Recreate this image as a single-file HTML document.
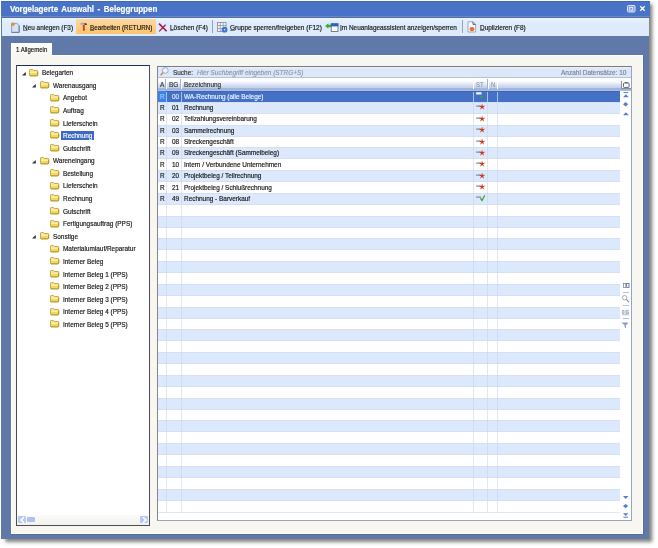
<!DOCTYPE html>
<html><head><meta charset="utf-8"><title>Vorgelagerte Auswahl - Beleggruppen</title>
<style>
html,body{margin:0;padding:0;background:#fff;}
body{width:658px;height:548px;position:relative;overflow:hidden;font-family:"Liberation Sans",sans-serif;}
.abs{position:absolute;}
.t{-webkit-text-stroke:0.18px currentColor;position:absolute;white-space:nowrap;line-height:12px;height:12px;transform-origin:0 50%;display:block;}
u{text-decoration:underline;text-decoration-color:rgba(30,30,30,.5);text-underline-offset:0px;text-decoration-thickness:0.8px;}
svg{position:absolute;overflow:visible;}
</style></head><body><div id="w" style="position:absolute;left:0;top:0;width:658px;height:548px;will-change:transform;">

<div class="abs" style="left:1.3px;top:1.4px;width:648.2px;height:538px;background:#6079a8;box-shadow:3.5px 3px 3.5px rgba(60,60,50,.64);"></div>
<div class="abs" style="left:1.3px;top:1.4px;width:648.6px;height:15.3px;background:#4873c6;border-top:0.8px solid #4267b6;border-bottom:0.8px solid #6389d4;box-sizing:border-box;"></div>
<div class="abs" style="left:1.3px;top:16.7px;width:648.6px;height:1px;background:#596e9c;"></div>
<span class="t " style="left:10px;top:3.00px;color:#fff;font-size:8.3px;transform:scaleX(0.96);font-weight:bold;word-spacing:1.35px;-webkit-text-stroke:0.15px #fff;">Vorgelagerte Auswahl - Beleggruppen</span>
<svg style="left:627px;top:5px" width="9" height="8" viewBox="0 0 9 8"><rect x="0.5" y="0.5" width="7.5" height="6.5" rx="1" fill="#7e9bd8" stroke="#dfe8f8" stroke-width="1"/><rect x="2.6" y="2.4" width="3.2" height="2.8" fill="none" stroke="#e8eefa" stroke-width="0.9"/></svg>
<svg style="left:640px;top:6px" width="5" height="5" viewBox="0 0 5 5"><path d="M0.3 0.3L4.7 4.7M4.7 0.3L0.3 4.7" stroke="#fff" stroke-width="1.3" fill="none"/></svg>
<div class="abs" style="left:1.5px;top:17.7px;width:647.8px;height:18.2px;background:linear-gradient(#ebf4ff 0%,#ddebfd 30%,#ddebfd 100%);"></div>
<div class="abs" style="left:75.8px;top:19.2px;width:79.8px;height:15px;background:linear-gradient(#fdd8a2,#fbc46c);"></div>
<span class="t " style="left:22.6px;top:22.20px;color:#141414;font-size:7.4px;transform:scaleX(0.87);"><u>N</u>eu anlegen (F3)</span>
<span class="t " style="left:90px;top:22.20px;color:#141414;font-size:7.4px;transform:scaleX(0.847);"><u>B</u>earbeiten (RETURN)</span>
<span class="t " style="left:170px;top:22.20px;color:#141414;font-size:7.4px;transform:scaleX(0.87);"><u>L</u>öschen (F4)</span>
<span class="t " style="left:229.7px;top:22.20px;color:#141414;font-size:7.4px;transform:scaleX(0.88);"><u>G</u>ruppe sperren/freigeben (F12)</span>
<span class="t " style="left:340px;top:22.20px;color:#141414;font-size:7.4px;transform:scaleX(0.87);"><u>I</u>m Neuanlageassistent anzeigen/sperren</span>
<span class="t " style="left:479.7px;top:22.20px;color:#141414;font-size:7.4px;transform:scaleX(0.87);"><u>D</u>uplizieren (F8)</span>
<div class="abs" style="left:212px;top:19.5px;width:0.9px;height:13.5px;background:#98a2b8;"></div>
<div class="abs" style="left:462px;top:19.5px;width:0.9px;height:13.5px;background:#98a2b8;"></div>
<svg style="left:11px;top:22px" width="9" height="12" viewBox="0 0 9 12"><path d="M0.6 1.4H5.8L8.2 3.6V10.4H0.6Z" fill="#d6e1f6" stroke="#8495b6" stroke-width="0.9"/><path d="M0.6 10.4H8.2V3.6" fill="none" stroke="#66789c" stroke-width="0.9"/><circle cx="1.9" cy="2.2" r="1.7" fill="#ee8a28"/></svg>
<svg style="left:79.5px;top:21.9px" width="8" height="9" viewBox="0 0 8 9"><path d="M0.4 1.2Q2.5 0.2 4.5 0.9L6.6 1.6V2.9L4.5 2.7H0.6Z" fill="#b7a3a3"/><path d="M4.6 1L6.7 1.7V3L4.6 2.8Z" fill="#2c2222"/><path d="M2.7 2.9H4.9L4.7 8.2Q3.8 8.8 3 8.2Z" fill="#d44a2a"/><path d="M3 7.4H4.7L4.6 8.3Q3.8 8.8 3.1 8.3Z" fill="#8a1c10"/></svg>
<svg style="left:158px;top:23px" width="9" height="9" viewBox="0 0 9 9"><path d="M1 0.6L8.6 8.2" stroke="#a41a3c" stroke-width="1.6" fill="none"/><path d="M7.6 1.8L1.2 8.4" stroke="#a41a3c" stroke-width="1.3" fill="none"/></svg>
<svg style="left:217px;top:22px" width="10" height="11" viewBox="0 0 10 11"><rect x="0.5" y="0.5" width="8.5" height="9" fill="#f4f6fb" stroke="#8b8698" stroke-width="0.8"/><path d="M0.5 3.5H9M0.5 6.5H9M3.3 0.5V9.5M6.2 0.5V9.5" stroke="#8b8698" stroke-width="0.7"/><circle cx="7.6" cy="7.7" r="2.9" fill="#3b78d2"/><circle cx="7.6" cy="7.7" r="0.8" fill="#cfe4ff"/></svg>
<svg style="left:325px;top:23px" width="14" height="9" viewBox="0 0 14 9"><path d="M0.1 3L3.4 0.2V1.7H6.5V4.3H3.4V5.8Z" fill="#36b326"/><rect x="6.2" y="0.8" width="6.8" height="7.6" fill="#fbfcff" stroke="#5a6070" stroke-width="0.8"/><rect x="5.9" y="0.4" width="7.4" height="3" fill="#2c62c2"/></svg>
<svg style="left:467px;top:20.5px" width="10" height="12" viewBox="0 0 10 12"><path d="M1 0.8H6L8.6 3.4V11H1Z" fill="#f7f8fc" stroke="#8c98b4" stroke-width="0.8"/><path d="M6 0.8V3.4H8.6" fill="none" stroke="#4a5060" stroke-width="0.9"/><ellipse cx="5" cy="8.1" rx="2.5" ry="2.2" fill="#ee6a2e"/></svg>
<div class="abs" style="left:11px;top:43px;width:41px;height:13px;background:linear-gradient(#fefefd,#f8f7f3);"></div>
<div class="abs" style="left:11px;top:55px;width:632px;height:478.5px;background:#f7f6f1;box-shadow:0.6px 0.6px 0 0.2px #536c9e;"></div>
<div class="abs" style="left:11px;top:532.6px;width:632px;height:0.9px;background:#fff;"></div>
<div class="abs" style="left:642.1px;top:55px;width:0.9px;height:478.5px;background:#fff;"></div>
<div class="abs" style="left:11px;top:43px;width:1.2px;height:490.5px;background:#fff;"></div>
<div class="abs" style="left:52px;top:55px;width:591px;height:1px;background:#fff;"></div>
<span class="t " style="left:16.4px;top:43.50px;color:#141414;font-size:7.4px;transform:scaleX(0.82);">1 Allgemein</span>
<div class="abs" style="left:16px;top:65.2px;width:133.6px;height:460.4px;background:#fff;border:0.9px solid #4c4c54;border-top:1.5px solid #1f2d5c;box-sizing:border-box;"></div>
<div class="abs" style="left:17px;top:515.3px;width:131.5px;height:9.3px;background:linear-gradient(#fbfbf9,#f2f1ec);"></div>
<div class="abs" style="left:18px;top:516.2px;width:8px;height:7.2px;background:#b7c9f3;border-radius:1px;"></div>
<svg style="left:19.6px;top:516.9px" width="5" height="6" viewBox="0 0 5 6"><path d="M4 0.3L1 3L4 5.7" stroke="#fff" stroke-width="1.5" fill="none"/></svg>
<div class="abs" style="left:27.1px;top:517.1px;width:8.4px;height:5.2px;background:#afc2ef;border-radius:1px;"></div>
<div class="abs" style="left:139.6px;top:516.2px;width:8.2px;height:7.2px;background:#b7c9f3;border-radius:1px;"></div>
<svg style="left:141.6px;top:516.9px" width="5" height="6" viewBox="0 0 5 6"><path d="M1 0.3L4 3L1 5.7" stroke="#fff" stroke-width="1.5" fill="none"/></svg>
<svg style="left:22.2px;top:71.70px" width="3.8" height="3.4" viewBox="0 0 3.8 3.4"><path d="M3.8 0V3.4H0Z" fill="#2e2e2e"/></svg>
<svg style="left:29.00px;top:68.50px" width="9.2" height="7.3" viewBox="0 0 9 7.6" preserveAspectRatio="none"><path d="M0.5 1.3Q0.5 0.5 1.3 0.5H3.3L4.2 1.5H7.7Q8.5 1.5 8.5 2.3V6.3Q8.5 7.1 7.7 7.1H1.3Q0.5 7.1 0.5 6.3Z" fill="#f7e596" stroke="#b99a30" stroke-width="0.85"/><path d="M0.9 3H8.1V6.2Q8.1 6.7 7.6 6.7H1.4Q0.9 6.7 0.9 6.2Z" fill="#f4d958"/><path d="M1.2 3.6H7.8" stroke="#fcf1ad" stroke-width="1"/><path d="M0.6 6.6Q0.8 7.1 1.4 7.1H7.6Q8.5 7.1 8.5 6.2V3" fill="none" stroke="#a88c26" stroke-width="0.85"/></svg>
<span class="t " style="left:42.2px;top:67.20px;color:#141414;font-size:7.4px;transform:scaleX(0.87);">Belegarten</span>
<svg style="left:32.4px;top:84.29px" width="3.8" height="3.4" viewBox="0 0 3.8 3.4"><path d="M3.8 0V3.4H0Z" fill="#2e2e2e"/></svg>
<svg style="left:40.00px;top:81.09px" width="9.2" height="7.3" viewBox="0 0 9 7.6" preserveAspectRatio="none"><path d="M0.5 1.3Q0.5 0.5 1.3 0.5H3.3L4.2 1.5H7.7Q8.5 1.5 8.5 2.3V6.3Q8.5 7.1 7.7 7.1H1.3Q0.5 7.1 0.5 6.3Z" fill="#f7e596" stroke="#b99a30" stroke-width="0.85"/><path d="M0.9 3H8.1V6.2Q8.1 6.7 7.6 6.7H1.4Q0.9 6.7 0.9 6.2Z" fill="#f4d958"/><path d="M1.2 3.6H7.8" stroke="#fcf1ad" stroke-width="1"/><path d="M0.6 6.6Q0.8 7.1 1.4 7.1H7.6Q8.5 7.1 8.5 6.2V3" fill="none" stroke="#a88c26" stroke-width="0.85"/></svg>
<span class="t " style="left:52.9px;top:79.79px;color:#141414;font-size:7.4px;transform:scaleX(0.87);">Warenausgang</span>
<svg style="left:50.20px;top:93.67px" width="9.2" height="7.3" viewBox="0 0 9 7.6" preserveAspectRatio="none"><path d="M0.5 1.3Q0.5 0.5 1.3 0.5H3.3L4.2 1.5H7.7Q8.5 1.5 8.5 2.3V6.3Q8.5 7.1 7.7 7.1H1.3Q0.5 7.1 0.5 6.3Z" fill="#f7e596" stroke="#b99a30" stroke-width="0.85"/><path d="M0.9 3H8.1V6.2Q8.1 6.7 7.6 6.7H1.4Q0.9 6.7 0.9 6.2Z" fill="#f4d958"/><path d="M1.2 3.6H7.8" stroke="#fcf1ad" stroke-width="1"/><path d="M0.6 6.6Q0.8 7.1 1.4 7.1H7.6Q8.5 7.1 8.5 6.2V3" fill="none" stroke="#a88c26" stroke-width="0.85"/></svg>
<span class="t " style="left:62.8px;top:92.37px;color:#141414;font-size:7.4px;transform:scaleX(0.87);">Angebot</span>
<svg style="left:50.20px;top:106.25px" width="9.2" height="7.3" viewBox="0 0 9 7.6" preserveAspectRatio="none"><path d="M0.5 1.3Q0.5 0.5 1.3 0.5H3.3L4.2 1.5H7.7Q8.5 1.5 8.5 2.3V6.3Q8.5 7.1 7.7 7.1H1.3Q0.5 7.1 0.5 6.3Z" fill="#f7e596" stroke="#b99a30" stroke-width="0.85"/><path d="M0.9 3H8.1V6.2Q8.1 6.7 7.6 6.7H1.4Q0.9 6.7 0.9 6.2Z" fill="#f4d958"/><path d="M1.2 3.6H7.8" stroke="#fcf1ad" stroke-width="1"/><path d="M0.6 6.6Q0.8 7.1 1.4 7.1H7.6Q8.5 7.1 8.5 6.2V3" fill="none" stroke="#a88c26" stroke-width="0.85"/></svg>
<span class="t " style="left:62.8px;top:104.95px;color:#141414;font-size:7.4px;transform:scaleX(0.87);">Auftrag</span>
<svg style="left:50.20px;top:118.84px" width="9.2" height="7.3" viewBox="0 0 9 7.6" preserveAspectRatio="none"><path d="M0.5 1.3Q0.5 0.5 1.3 0.5H3.3L4.2 1.5H7.7Q8.5 1.5 8.5 2.3V6.3Q8.5 7.1 7.7 7.1H1.3Q0.5 7.1 0.5 6.3Z" fill="#f7e596" stroke="#b99a30" stroke-width="0.85"/><path d="M0.9 3H8.1V6.2Q8.1 6.7 7.6 6.7H1.4Q0.9 6.7 0.9 6.2Z" fill="#f4d958"/><path d="M1.2 3.6H7.8" stroke="#fcf1ad" stroke-width="1"/><path d="M0.6 6.6Q0.8 7.1 1.4 7.1H7.6Q8.5 7.1 8.5 6.2V3" fill="none" stroke="#a88c26" stroke-width="0.85"/></svg>
<span class="t " style="left:62.8px;top:117.54px;color:#141414;font-size:7.4px;transform:scaleX(0.87);">Lieferschein</span>
<svg style="left:50.20px;top:131.43px" width="9.2" height="7.3" viewBox="0 0 9 7.6" preserveAspectRatio="none"><path d="M0.5 1.3Q0.5 0.5 1.3 0.5H3.3L4.2 1.5H7.7Q8.5 1.5 8.5 2.3V6.3Q8.5 7.1 7.7 7.1H1.3Q0.5 7.1 0.5 6.3Z" fill="#f7e596" stroke="#b99a30" stroke-width="0.85"/><path d="M0.9 3H8.1V6.2Q8.1 6.7 7.6 6.7H1.4Q0.9 6.7 0.9 6.2Z" fill="#f4d958"/><path d="M1.2 3.6H7.8" stroke="#fcf1ad" stroke-width="1"/><path d="M0.6 6.6Q0.8 7.1 1.4 7.1H7.6Q8.5 7.1 8.5 6.2V3" fill="none" stroke="#a88c26" stroke-width="0.85"/></svg>
<div class="abs" style="left:61px;top:131.13px;width:32.6px;height:9.2px;background:#3c69c2;"></div>
<span class="t " style="left:62.8px;top:130.13px;color:#fff;font-size:7.4px;transform:scaleX(0.87);">Rechnung</span>
<svg style="left:50.20px;top:144.01px" width="9.2" height="7.3" viewBox="0 0 9 7.6" preserveAspectRatio="none"><path d="M0.5 1.3Q0.5 0.5 1.3 0.5H3.3L4.2 1.5H7.7Q8.5 1.5 8.5 2.3V6.3Q8.5 7.1 7.7 7.1H1.3Q0.5 7.1 0.5 6.3Z" fill="#f7e596" stroke="#b99a30" stroke-width="0.85"/><path d="M0.9 3H8.1V6.2Q8.1 6.7 7.6 6.7H1.4Q0.9 6.7 0.9 6.2Z" fill="#f4d958"/><path d="M1.2 3.6H7.8" stroke="#fcf1ad" stroke-width="1"/><path d="M0.6 6.6Q0.8 7.1 1.4 7.1H7.6Q8.5 7.1 8.5 6.2V3" fill="none" stroke="#a88c26" stroke-width="0.85"/></svg>
<span class="t " style="left:62.8px;top:142.71px;color:#141414;font-size:7.4px;transform:scaleX(0.87);">Gutschrift</span>
<svg style="left:32.4px;top:159.80px" width="3.8" height="3.4" viewBox="0 0 3.8 3.4"><path d="M3.8 0V3.4H0Z" fill="#2e2e2e"/></svg>
<svg style="left:40.00px;top:156.59px" width="9.2" height="7.3" viewBox="0 0 9 7.6" preserveAspectRatio="none"><path d="M0.5 1.3Q0.5 0.5 1.3 0.5H3.3L4.2 1.5H7.7Q8.5 1.5 8.5 2.3V6.3Q8.5 7.1 7.7 7.1H1.3Q0.5 7.1 0.5 6.3Z" fill="#f7e596" stroke="#b99a30" stroke-width="0.85"/><path d="M0.9 3H8.1V6.2Q8.1 6.7 7.6 6.7H1.4Q0.9 6.7 0.9 6.2Z" fill="#f4d958"/><path d="M1.2 3.6H7.8" stroke="#fcf1ad" stroke-width="1"/><path d="M0.6 6.6Q0.8 7.1 1.4 7.1H7.6Q8.5 7.1 8.5 6.2V3" fill="none" stroke="#a88c26" stroke-width="0.85"/></svg>
<span class="t " style="left:52.9px;top:155.30px;color:#141414;font-size:7.4px;transform:scaleX(0.87);">Wareneingang</span>
<svg style="left:50.20px;top:169.18px" width="9.2" height="7.3" viewBox="0 0 9 7.6" preserveAspectRatio="none"><path d="M0.5 1.3Q0.5 0.5 1.3 0.5H3.3L4.2 1.5H7.7Q8.5 1.5 8.5 2.3V6.3Q8.5 7.1 7.7 7.1H1.3Q0.5 7.1 0.5 6.3Z" fill="#f7e596" stroke="#b99a30" stroke-width="0.85"/><path d="M0.9 3H8.1V6.2Q8.1 6.7 7.6 6.7H1.4Q0.9 6.7 0.9 6.2Z" fill="#f4d958"/><path d="M1.2 3.6H7.8" stroke="#fcf1ad" stroke-width="1"/><path d="M0.6 6.6Q0.8 7.1 1.4 7.1H7.6Q8.5 7.1 8.5 6.2V3" fill="none" stroke="#a88c26" stroke-width="0.85"/></svg>
<span class="t " style="left:62.8px;top:167.88px;color:#141414;font-size:7.4px;transform:scaleX(0.87);">Bestellung</span>
<svg style="left:50.20px;top:181.77px" width="9.2" height="7.3" viewBox="0 0 9 7.6" preserveAspectRatio="none"><path d="M0.5 1.3Q0.5 0.5 1.3 0.5H3.3L4.2 1.5H7.7Q8.5 1.5 8.5 2.3V6.3Q8.5 7.1 7.7 7.1H1.3Q0.5 7.1 0.5 6.3Z" fill="#f7e596" stroke="#b99a30" stroke-width="0.85"/><path d="M0.9 3H8.1V6.2Q8.1 6.7 7.6 6.7H1.4Q0.9 6.7 0.9 6.2Z" fill="#f4d958"/><path d="M1.2 3.6H7.8" stroke="#fcf1ad" stroke-width="1"/><path d="M0.6 6.6Q0.8 7.1 1.4 7.1H7.6Q8.5 7.1 8.5 6.2V3" fill="none" stroke="#a88c26" stroke-width="0.85"/></svg>
<span class="t " style="left:62.8px;top:180.47px;color:#141414;font-size:7.4px;transform:scaleX(0.87);">Lieferschein</span>
<svg style="left:50.20px;top:194.35px" width="9.2" height="7.3" viewBox="0 0 9 7.6" preserveAspectRatio="none"><path d="M0.5 1.3Q0.5 0.5 1.3 0.5H3.3L4.2 1.5H7.7Q8.5 1.5 8.5 2.3V6.3Q8.5 7.1 7.7 7.1H1.3Q0.5 7.1 0.5 6.3Z" fill="#f7e596" stroke="#b99a30" stroke-width="0.85"/><path d="M0.9 3H8.1V6.2Q8.1 6.7 7.6 6.7H1.4Q0.9 6.7 0.9 6.2Z" fill="#f4d958"/><path d="M1.2 3.6H7.8" stroke="#fcf1ad" stroke-width="1"/><path d="M0.6 6.6Q0.8 7.1 1.4 7.1H7.6Q8.5 7.1 8.5 6.2V3" fill="none" stroke="#a88c26" stroke-width="0.85"/></svg>
<span class="t " style="left:62.8px;top:193.05px;color:#141414;font-size:7.4px;transform:scaleX(0.87);">Rechnung</span>
<svg style="left:50.20px;top:206.94px" width="9.2" height="7.3" viewBox="0 0 9 7.6" preserveAspectRatio="none"><path d="M0.5 1.3Q0.5 0.5 1.3 0.5H3.3L4.2 1.5H7.7Q8.5 1.5 8.5 2.3V6.3Q8.5 7.1 7.7 7.1H1.3Q0.5 7.1 0.5 6.3Z" fill="#f7e596" stroke="#b99a30" stroke-width="0.85"/><path d="M0.9 3H8.1V6.2Q8.1 6.7 7.6 6.7H1.4Q0.9 6.7 0.9 6.2Z" fill="#f4d958"/><path d="M1.2 3.6H7.8" stroke="#fcf1ad" stroke-width="1"/><path d="M0.6 6.6Q0.8 7.1 1.4 7.1H7.6Q8.5 7.1 8.5 6.2V3" fill="none" stroke="#a88c26" stroke-width="0.85"/></svg>
<span class="t " style="left:62.8px;top:205.64px;color:#141414;font-size:7.4px;transform:scaleX(0.87);">Gutschrift</span>
<svg style="left:50.20px;top:219.52px" width="9.2" height="7.3" viewBox="0 0 9 7.6" preserveAspectRatio="none"><path d="M0.5 1.3Q0.5 0.5 1.3 0.5H3.3L4.2 1.5H7.7Q8.5 1.5 8.5 2.3V6.3Q8.5 7.1 7.7 7.1H1.3Q0.5 7.1 0.5 6.3Z" fill="#f7e596" stroke="#b99a30" stroke-width="0.85"/><path d="M0.9 3H8.1V6.2Q8.1 6.7 7.6 6.7H1.4Q0.9 6.7 0.9 6.2Z" fill="#f4d958"/><path d="M1.2 3.6H7.8" stroke="#fcf1ad" stroke-width="1"/><path d="M0.6 6.6Q0.8 7.1 1.4 7.1H7.6Q8.5 7.1 8.5 6.2V3" fill="none" stroke="#a88c26" stroke-width="0.85"/></svg>
<span class="t " style="left:62.8px;top:218.22px;color:#141414;font-size:7.4px;transform:scaleX(0.87);">Fertigungsauftrag (PPS)</span>
<svg style="left:32.4px;top:235.31px" width="3.8" height="3.4" viewBox="0 0 3.8 3.4"><path d="M3.8 0V3.4H0Z" fill="#2e2e2e"/></svg>
<svg style="left:40.00px;top:232.11px" width="9.2" height="7.3" viewBox="0 0 9 7.6" preserveAspectRatio="none"><path d="M0.5 1.3Q0.5 0.5 1.3 0.5H3.3L4.2 1.5H7.7Q8.5 1.5 8.5 2.3V6.3Q8.5 7.1 7.7 7.1H1.3Q0.5 7.1 0.5 6.3Z" fill="#f7e596" stroke="#b99a30" stroke-width="0.85"/><path d="M0.9 3H8.1V6.2Q8.1 6.7 7.6 6.7H1.4Q0.9 6.7 0.9 6.2Z" fill="#f4d958"/><path d="M1.2 3.6H7.8" stroke="#fcf1ad" stroke-width="1"/><path d="M0.6 6.6Q0.8 7.1 1.4 7.1H7.6Q8.5 7.1 8.5 6.2V3" fill="none" stroke="#a88c26" stroke-width="0.85"/></svg>
<span class="t " style="left:52.9px;top:230.81px;color:#141414;font-size:7.4px;transform:scaleX(0.87);">Sonstige</span>
<svg style="left:50.20px;top:244.69px" width="9.2" height="7.3" viewBox="0 0 9 7.6" preserveAspectRatio="none"><path d="M0.5 1.3Q0.5 0.5 1.3 0.5H3.3L4.2 1.5H7.7Q8.5 1.5 8.5 2.3V6.3Q8.5 7.1 7.7 7.1H1.3Q0.5 7.1 0.5 6.3Z" fill="#f7e596" stroke="#b99a30" stroke-width="0.85"/><path d="M0.9 3H8.1V6.2Q8.1 6.7 7.6 6.7H1.4Q0.9 6.7 0.9 6.2Z" fill="#f4d958"/><path d="M1.2 3.6H7.8" stroke="#fcf1ad" stroke-width="1"/><path d="M0.6 6.6Q0.8 7.1 1.4 7.1H7.6Q8.5 7.1 8.5 6.2V3" fill="none" stroke="#a88c26" stroke-width="0.85"/></svg>
<span class="t " style="left:62.8px;top:243.39px;color:#141414;font-size:7.4px;transform:scaleX(0.87);">Materialumlauf/Reparatur</span>
<svg style="left:50.20px;top:257.28px" width="9.2" height="7.3" viewBox="0 0 9 7.6" preserveAspectRatio="none"><path d="M0.5 1.3Q0.5 0.5 1.3 0.5H3.3L4.2 1.5H7.7Q8.5 1.5 8.5 2.3V6.3Q8.5 7.1 7.7 7.1H1.3Q0.5 7.1 0.5 6.3Z" fill="#f7e596" stroke="#b99a30" stroke-width="0.85"/><path d="M0.9 3H8.1V6.2Q8.1 6.7 7.6 6.7H1.4Q0.9 6.7 0.9 6.2Z" fill="#f4d958"/><path d="M1.2 3.6H7.8" stroke="#fcf1ad" stroke-width="1"/><path d="M0.6 6.6Q0.8 7.1 1.4 7.1H7.6Q8.5 7.1 8.5 6.2V3" fill="none" stroke="#a88c26" stroke-width="0.85"/></svg>
<span class="t " style="left:62.8px;top:255.98px;color:#141414;font-size:7.4px;transform:scaleX(0.87);">Interner Beleg</span>
<svg style="left:50.20px;top:269.86px" width="9.2" height="7.3" viewBox="0 0 9 7.6" preserveAspectRatio="none"><path d="M0.5 1.3Q0.5 0.5 1.3 0.5H3.3L4.2 1.5H7.7Q8.5 1.5 8.5 2.3V6.3Q8.5 7.1 7.7 7.1H1.3Q0.5 7.1 0.5 6.3Z" fill="#f7e596" stroke="#b99a30" stroke-width="0.85"/><path d="M0.9 3H8.1V6.2Q8.1 6.7 7.6 6.7H1.4Q0.9 6.7 0.9 6.2Z" fill="#f4d958"/><path d="M1.2 3.6H7.8" stroke="#fcf1ad" stroke-width="1"/><path d="M0.6 6.6Q0.8 7.1 1.4 7.1H7.6Q8.5 7.1 8.5 6.2V3" fill="none" stroke="#a88c26" stroke-width="0.85"/></svg>
<span class="t " style="left:62.8px;top:268.56px;color:#141414;font-size:7.4px;transform:scaleX(0.87);">Interner Beleg 1 (PPS)</span>
<svg style="left:50.20px;top:282.45px" width="9.2" height="7.3" viewBox="0 0 9 7.6" preserveAspectRatio="none"><path d="M0.5 1.3Q0.5 0.5 1.3 0.5H3.3L4.2 1.5H7.7Q8.5 1.5 8.5 2.3V6.3Q8.5 7.1 7.7 7.1H1.3Q0.5 7.1 0.5 6.3Z" fill="#f7e596" stroke="#b99a30" stroke-width="0.85"/><path d="M0.9 3H8.1V6.2Q8.1 6.7 7.6 6.7H1.4Q0.9 6.7 0.9 6.2Z" fill="#f4d958"/><path d="M1.2 3.6H7.8" stroke="#fcf1ad" stroke-width="1"/><path d="M0.6 6.6Q0.8 7.1 1.4 7.1H7.6Q8.5 7.1 8.5 6.2V3" fill="none" stroke="#a88c26" stroke-width="0.85"/></svg>
<span class="t " style="left:62.8px;top:281.15px;color:#141414;font-size:7.4px;transform:scaleX(0.87);">Interner Beleg 2 (PPS)</span>
<svg style="left:50.20px;top:295.03px" width="9.2" height="7.3" viewBox="0 0 9 7.6" preserveAspectRatio="none"><path d="M0.5 1.3Q0.5 0.5 1.3 0.5H3.3L4.2 1.5H7.7Q8.5 1.5 8.5 2.3V6.3Q8.5 7.1 7.7 7.1H1.3Q0.5 7.1 0.5 6.3Z" fill="#f7e596" stroke="#b99a30" stroke-width="0.85"/><path d="M0.9 3H8.1V6.2Q8.1 6.7 7.6 6.7H1.4Q0.9 6.7 0.9 6.2Z" fill="#f4d958"/><path d="M1.2 3.6H7.8" stroke="#fcf1ad" stroke-width="1"/><path d="M0.6 6.6Q0.8 7.1 1.4 7.1H7.6Q8.5 7.1 8.5 6.2V3" fill="none" stroke="#a88c26" stroke-width="0.85"/></svg>
<span class="t " style="left:62.8px;top:293.73px;color:#141414;font-size:7.4px;transform:scaleX(0.87);">Interner Beleg 3 (PPS)</span>
<svg style="left:50.20px;top:307.62px" width="9.2" height="7.3" viewBox="0 0 9 7.6" preserveAspectRatio="none"><path d="M0.5 1.3Q0.5 0.5 1.3 0.5H3.3L4.2 1.5H7.7Q8.5 1.5 8.5 2.3V6.3Q8.5 7.1 7.7 7.1H1.3Q0.5 7.1 0.5 6.3Z" fill="#f7e596" stroke="#b99a30" stroke-width="0.85"/><path d="M0.9 3H8.1V6.2Q8.1 6.7 7.6 6.7H1.4Q0.9 6.7 0.9 6.2Z" fill="#f4d958"/><path d="M1.2 3.6H7.8" stroke="#fcf1ad" stroke-width="1"/><path d="M0.6 6.6Q0.8 7.1 1.4 7.1H7.6Q8.5 7.1 8.5 6.2V3" fill="none" stroke="#a88c26" stroke-width="0.85"/></svg>
<span class="t " style="left:62.8px;top:306.31px;color:#141414;font-size:7.4px;transform:scaleX(0.87);">Interner Beleg 4 (PPS)</span>
<svg style="left:50.20px;top:320.20px" width="9.2" height="7.3" viewBox="0 0 9 7.6" preserveAspectRatio="none"><path d="M0.5 1.3Q0.5 0.5 1.3 0.5H3.3L4.2 1.5H7.7Q8.5 1.5 8.5 2.3V6.3Q8.5 7.1 7.7 7.1H1.3Q0.5 7.1 0.5 6.3Z" fill="#f7e596" stroke="#b99a30" stroke-width="0.85"/><path d="M0.9 3H8.1V6.2Q8.1 6.7 7.6 6.7H1.4Q0.9 6.7 0.9 6.2Z" fill="#f4d958"/><path d="M1.2 3.6H7.8" stroke="#fcf1ad" stroke-width="1"/><path d="M0.6 6.6Q0.8 7.1 1.4 7.1H7.6Q8.5 7.1 8.5 6.2V3" fill="none" stroke="#a88c26" stroke-width="0.85"/></svg>
<span class="t " style="left:62.8px;top:318.90px;color:#141414;font-size:7.4px;transform:scaleX(0.87);">Interner Beleg 5 (PPS)</span>
<div class="abs" style="left:156.5px;top:65.5px;width:475.0px;height:455.5px;background:#fff;border:1px solid #93a5c9;border-top:1.1px solid #777c86;border-left:1.1px solid #85858f;border-bottom:1px solid #a3a3b6;box-sizing:border-box;"></div>
<div class="abs" style="left:157.5px;top:66.5px;width:473.0px;height:11px;background:linear-gradient(#eef3fb 0px,#dbe6f6 2px,#dde8fa 11px);"></div>
<div class="abs" style="left:157.5px;top:77.2px;width:473.0px;height:13.6px;background:linear-gradient(#ffffff 0px,#ffffff 3px,#dde6f6 6.4px,#bccbe8 10.3px,#9aaccc 10.6px,#9aaccc 11.4px,#a9c0ee 11.7px,#a9c0ee 12.8px);border-top:0.8px solid #b5c2d8;box-sizing:border-box;"></div>
<div class="abs" style="left:165.3px;top:79.3px;width:0.8px;height:9.6px;background:#a6b2cc;"></div>
<div class="abs" style="left:166.1px;top:79.3px;width:0.9px;height:9.6px;background:#fbfdff;"></div>
<div class="abs" style="left:180.1px;top:79.3px;width:0.8px;height:9.6px;background:#a6b2cc;"></div>
<div class="abs" style="left:180.9px;top:79.3px;width:0.9px;height:9.6px;background:#fbfdff;"></div>
<div class="abs" style="left:472.5px;top:79.3px;width:0.8px;height:9.6px;background:#a6b2cc;"></div>
<div class="abs" style="left:473.3px;top:79.3px;width:0.9px;height:9.6px;background:#fbfdff;"></div>
<div class="abs" style="left:486.7px;top:79.3px;width:0.8px;height:9.6px;background:#a6b2cc;"></div>
<div class="abs" style="left:487.5px;top:79.3px;width:0.9px;height:9.6px;background:#fbfdff;"></div>
<div class="abs" style="left:496.5px;top:79.3px;width:0.8px;height:9.6px;background:#a6b2cc;"></div>
<div class="abs" style="left:497.3px;top:79.3px;width:0.9px;height:9.6px;background:#fbfdff;"></div>
<svg style="left:160.3px;top:66.9px" width="9" height="9" viewBox="0 0 9 9"><circle cx="5.3" cy="3.5" r="2.9" fill="#eaf3ff" stroke="#90a4c8" stroke-width="0.9"/><path d="M3.2 5.6L0.6 8.2" stroke="#c98a3a" stroke-width="1.4"/></svg>
<span class="t " style="left:172.9px;top:66.90px;color:#333;font-size:7.4px;transform:scaleX(0.87);">Suche:</span>
<span class="t " style="left:197.1px;top:66.90px;color:#8d98ad;font-size:7.4px;transform:scaleX(0.87);font-style:italic;">Hier Suchbegriff eingeben (STRG+S)</span>
<span class="t " style="left:560.8px;top:66.90px;color:#7c8495;font-size:7.4px;transform:scaleX(0.88);">Anzahl Datensätze: 10</span>
<span class="t " style="left:160.2px;top:79.30px;color:#333;font-size:7.4px;transform:scaleX(0.87);">A</span>
<span class="t " style="left:169.4px;top:79.30px;color:#333;font-size:7.4px;transform:scaleX(0.87);">BG</span>
<span class="t " style="left:183.9px;top:79.30px;color:#333;font-size:7.4px;transform:scaleX(0.87);">Bezeichnung</span>
<span class="t " style="left:476.1px;top:79.30px;color:#8f98ab;font-size:7.4px;transform:scaleX(0.8);">ST</span>
<span class="t " style="left:490.7px;top:79.30px;color:#8f98ab;font-size:7.4px;transform:scaleX(0.8);">N</span>
<div class="abs" style="left:621.4px;top:80.6px;width:9.2px;height:8.8px;background:#fbfcfe;border-left:0.8px solid #8b8f98;border-bottom:0.8px solid #8b8f98;box-sizing:border-box;"></div>
<svg style="left:622.6px;top:82px" width="7" height="6" viewBox="0 0 7 6"><rect x="0.5" y="1" width="5.6" height="4.4" rx="0.8" fill="#fff" stroke="#4c5260" stroke-width="0.9"/><path d="M2 0.5H4.6" stroke="#4c5260" stroke-width="0.8"/></svg>
<div class="abs" style="left:157.5px;top:91.10px;width:462.79999999999995px;height:10.82px;background:#4470c6;"></div>
<div class="abs" style="left:157.5px;top:101.87px;width:462.79999999999995px;height:12.02px;background:#dce9fc;border-top:0.7px solid #d5e0f5;border-bottom:0.7px solid #d5e0f5;box-sizing:border-box;"></div>
<div class="abs" style="left:157.5px;top:124.62px;width:462.79999999999995px;height:12.02px;background:#dce9fc;border-top:0.7px solid #d5e0f5;border-bottom:0.7px solid #d5e0f5;box-sizing:border-box;"></div>
<div class="abs" style="left:157.5px;top:147.36px;width:462.79999999999995px;height:12.02px;background:#dce9fc;border-top:0.7px solid #d5e0f5;border-bottom:0.7px solid #d5e0f5;box-sizing:border-box;"></div>
<div class="abs" style="left:157.5px;top:170.11px;width:462.79999999999995px;height:12.02px;background:#dce9fc;border-top:0.7px solid #d5e0f5;border-bottom:0.7px solid #d5e0f5;box-sizing:border-box;"></div>
<div class="abs" style="left:157.5px;top:192.86px;width:462.79999999999995px;height:12.02px;background:#dce9fc;border-top:0.7px solid #d5e0f5;border-bottom:0.7px solid #d5e0f5;box-sizing:border-box;"></div>
<div class="abs" style="left:157.5px;top:215.60px;width:462.79999999999995px;height:12.02px;background:#dce9fc;border-top:0.7px solid #d5e0f5;border-bottom:0.7px solid #d5e0f5;box-sizing:border-box;"></div>
<div class="abs" style="left:157.5px;top:238.35px;width:462.79999999999995px;height:12.02px;background:#dce9fc;border-top:0.7px solid #d5e0f5;border-bottom:0.7px solid #d5e0f5;box-sizing:border-box;"></div>
<div class="abs" style="left:157.5px;top:261.09px;width:462.79999999999995px;height:12.02px;background:#dce9fc;border-top:0.7px solid #d5e0f5;border-bottom:0.7px solid #d5e0f5;box-sizing:border-box;"></div>
<div class="abs" style="left:157.5px;top:283.84px;width:462.79999999999995px;height:12.02px;background:#dce9fc;border-top:0.7px solid #d5e0f5;border-bottom:0.7px solid #d5e0f5;box-sizing:border-box;"></div>
<div class="abs" style="left:157.5px;top:306.59px;width:462.79999999999995px;height:12.02px;background:#dce9fc;border-top:0.7px solid #d5e0f5;border-bottom:0.7px solid #d5e0f5;box-sizing:border-box;"></div>
<div class="abs" style="left:157.5px;top:329.33px;width:462.79999999999995px;height:12.02px;background:#dce9fc;border-top:0.7px solid #d5e0f5;border-bottom:0.7px solid #d5e0f5;box-sizing:border-box;"></div>
<div class="abs" style="left:157.5px;top:352.08px;width:462.79999999999995px;height:12.02px;background:#dce9fc;border-top:0.7px solid #d5e0f5;border-bottom:0.7px solid #d5e0f5;box-sizing:border-box;"></div>
<div class="abs" style="left:157.5px;top:374.82px;width:462.79999999999995px;height:12.02px;background:#dce9fc;border-top:0.7px solid #d5e0f5;border-bottom:0.7px solid #d5e0f5;box-sizing:border-box;"></div>
<div class="abs" style="left:157.5px;top:397.57px;width:462.79999999999995px;height:12.02px;background:#dce9fc;border-top:0.7px solid #d5e0f5;border-bottom:0.7px solid #d5e0f5;box-sizing:border-box;"></div>
<div class="abs" style="left:157.5px;top:420.32px;width:462.79999999999995px;height:12.02px;background:#dce9fc;border-top:0.7px solid #d5e0f5;border-bottom:0.7px solid #d5e0f5;box-sizing:border-box;"></div>
<div class="abs" style="left:157.5px;top:443.06px;width:462.79999999999995px;height:12.02px;background:#dce9fc;border-top:0.7px solid #d5e0f5;border-bottom:0.7px solid #d5e0f5;box-sizing:border-box;"></div>
<div class="abs" style="left:157.5px;top:465.81px;width:462.79999999999995px;height:12.02px;background:#dce9fc;border-top:0.7px solid #d5e0f5;border-bottom:0.7px solid #d5e0f5;box-sizing:border-box;"></div>
<div class="abs" style="left:157.5px;top:488.55px;width:462.79999999999995px;height:12.02px;background:#dce9fc;border-top:0.7px solid #d5e0f5;border-bottom:0.7px solid #d5e0f5;box-sizing:border-box;"></div>
<div class="abs" style="left:157.5px;top:511.90px;width:462.79999999999995px;height:1.60px;background:#dce9fc;"></div>
<div class="abs" style="left:165.8px;top:91.1px;width:0.9px;height:421.5px;background:rgba(200,214,242,.6);"></div>
<div class="abs" style="left:180.6px;top:91.1px;width:0.9px;height:421.5px;background:rgba(200,214,242,.6);"></div>
<div class="abs" style="left:473.0px;top:91.1px;width:0.9px;height:421.5px;background:rgba(200,214,242,.6);"></div>
<div class="abs" style="left:487.2px;top:91.1px;width:0.9px;height:421.5px;background:rgba(200,214,242,.6);"></div>
<div class="abs" style="left:497.0px;top:91.1px;width:0.9px;height:421.5px;background:rgba(200,214,242,.6);"></div>
<div class="abs" style="left:165.8px;top:91.1px;width:0.9px;height:10.47px;background:#a9c0f0;"></div>
<div class="abs" style="left:180.6px;top:91.1px;width:0.9px;height:10.47px;background:#a9c0f0;"></div>
<div class="abs" style="left:473.0px;top:91.1px;width:0.9px;height:10.47px;background:#a9c0f0;"></div>
<div class="abs" style="left:487.2px;top:91.1px;width:0.9px;height:10.47px;background:#a9c0f0;"></div>
<div class="abs" style="left:497.0px;top:91.1px;width:0.9px;height:10.47px;background:#a9c0f0;"></div>
<span class="t " style="left:159.9px;top:90.54px;color:#8fb0ee;font-size:7.4px;transform:scaleX(0.87);">R</span>
<span class="t " style="left:171.9px;top:90.54px;color:#e0e9fb;font-size:7.4px;transform:scaleX(0.87);">00</span>
<span class="t " style="left:184px;top:90.54px;color:#eef3fd;font-size:7.4px;transform:scaleX(0.87);">WA-Rechnung (alle Belege)</span>
<svg style="left:476px;top:92.24px" width="10" height="8" viewBox="0 0 10 8"><rect x="0.1" y="0.2" width="5.4" height="2.3" fill="#f2f6ff"/><circle cx="5.3" cy="4.9" r="1.3" fill="#38a048"/></svg>
<span class="t " style="left:159.9px;top:101.91px;color:#141414;font-size:7.4px;transform:scaleX(0.87);">R</span>
<span class="t " style="left:171.9px;top:101.91px;color:#141414;font-size:7.4px;transform:scaleX(0.87);">01</span>
<span class="t " style="left:184px;top:101.91px;color:#141414;font-size:7.4px;transform:scaleX(0.87);">Rechnung</span>
<svg style="left:476px;top:103.41px" width="10" height="8" viewBox="0 0 10 8"><path d="M0.1 3.1H5" stroke="#5f6573" stroke-width="0.9"/><polygon points="6.10,0.40 6.78,2.97 9.43,2.82 7.19,4.26 8.16,6.73 6.10,5.05 4.04,6.73 5.01,4.26 2.77,2.82 5.42,2.97" fill="#c63a1a"/></svg>
<span class="t " style="left:159.9px;top:113.28px;color:#141414;font-size:7.4px;transform:scaleX(0.87);">R</span>
<span class="t " style="left:171.9px;top:113.28px;color:#141414;font-size:7.4px;transform:scaleX(0.87);">02</span>
<span class="t " style="left:184px;top:113.28px;color:#141414;font-size:7.4px;transform:scaleX(0.87);">Teilzahlungsvereinbarung</span>
<svg style="left:476px;top:114.78px" width="10" height="8" viewBox="0 0 10 8"><path d="M0.1 3.1H5" stroke="#5f6573" stroke-width="0.9"/><polygon points="6.10,0.40 6.78,2.97 9.43,2.82 7.19,4.26 8.16,6.73 6.10,5.05 4.04,6.73 5.01,4.26 2.77,2.82 5.42,2.97" fill="#c63a1a"/></svg>
<span class="t " style="left:159.9px;top:124.66px;color:#141414;font-size:7.4px;transform:scaleX(0.87);">R</span>
<span class="t " style="left:171.9px;top:124.66px;color:#141414;font-size:7.4px;transform:scaleX(0.87);">03</span>
<span class="t " style="left:184px;top:124.66px;color:#141414;font-size:7.4px;transform:scaleX(0.87);">Sammelrechnung</span>
<svg style="left:476px;top:126.16px" width="10" height="8" viewBox="0 0 10 8"><path d="M0.1 3.1H5" stroke="#5f6573" stroke-width="0.9"/><polygon points="6.10,0.40 6.78,2.97 9.43,2.82 7.19,4.26 8.16,6.73 6.10,5.05 4.04,6.73 5.01,4.26 2.77,2.82 5.42,2.97" fill="#c63a1a"/></svg>
<span class="t " style="left:159.9px;top:136.03px;color:#141414;font-size:7.4px;transform:scaleX(0.87);">R</span>
<span class="t " style="left:171.9px;top:136.03px;color:#141414;font-size:7.4px;transform:scaleX(0.87);">08</span>
<span class="t " style="left:184px;top:136.03px;color:#141414;font-size:7.4px;transform:scaleX(0.87);">Streckengeschäft</span>
<svg style="left:476px;top:137.53px" width="10" height="8" viewBox="0 0 10 8"><path d="M0.1 3.1H5" stroke="#5f6573" stroke-width="0.9"/><polygon points="6.10,0.40 6.78,2.97 9.43,2.82 7.19,4.26 8.16,6.73 6.10,5.05 4.04,6.73 5.01,4.26 2.77,2.82 5.42,2.97" fill="#c63a1a"/></svg>
<span class="t " style="left:159.9px;top:147.40px;color:#141414;font-size:7.4px;transform:scaleX(0.87);">R</span>
<span class="t " style="left:171.9px;top:147.40px;color:#141414;font-size:7.4px;transform:scaleX(0.87);">09</span>
<span class="t " style="left:184px;top:147.40px;color:#141414;font-size:7.4px;transform:scaleX(0.87);">Streckengeschäft (Sammelbeleg)</span>
<svg style="left:476px;top:148.90px" width="10" height="8" viewBox="0 0 10 8"><path d="M0.1 3.1H5" stroke="#5f6573" stroke-width="0.9"/><polygon points="6.10,0.40 6.78,2.97 9.43,2.82 7.19,4.26 8.16,6.73 6.10,5.05 4.04,6.73 5.01,4.26 2.77,2.82 5.42,2.97" fill="#c63a1a"/></svg>
<span class="t " style="left:159.9px;top:158.77px;color:#141414;font-size:7.4px;transform:scaleX(0.87);">R</span>
<span class="t " style="left:171.9px;top:158.77px;color:#141414;font-size:7.4px;transform:scaleX(0.87);">10</span>
<span class="t " style="left:184px;top:158.77px;color:#141414;font-size:7.4px;transform:scaleX(0.87);">Intern / Verbundene Unternehmen</span>
<svg style="left:476px;top:160.27px" width="10" height="8" viewBox="0 0 10 8"><path d="M0.1 3.1H5" stroke="#5f6573" stroke-width="0.9"/><polygon points="6.10,0.40 6.78,2.97 9.43,2.82 7.19,4.26 8.16,6.73 6.10,5.05 4.04,6.73 5.01,4.26 2.77,2.82 5.42,2.97" fill="#c63a1a"/></svg>
<span class="t " style="left:159.9px;top:170.15px;color:#141414;font-size:7.4px;transform:scaleX(0.87);">R</span>
<span class="t " style="left:171.9px;top:170.15px;color:#141414;font-size:7.4px;transform:scaleX(0.87);">20</span>
<span class="t " style="left:184px;top:170.15px;color:#141414;font-size:7.4px;transform:scaleX(0.87);">Projektbeleg / Teilrechnung</span>
<svg style="left:476px;top:171.65px" width="10" height="8" viewBox="0 0 10 8"><path d="M0.1 3.1H5" stroke="#5f6573" stroke-width="0.9"/><polygon points="6.10,0.40 6.78,2.97 9.43,2.82 7.19,4.26 8.16,6.73 6.10,5.05 4.04,6.73 5.01,4.26 2.77,2.82 5.42,2.97" fill="#c63a1a"/></svg>
<span class="t " style="left:159.9px;top:181.52px;color:#141414;font-size:7.4px;transform:scaleX(0.87);">R</span>
<span class="t " style="left:171.9px;top:181.52px;color:#141414;font-size:7.4px;transform:scaleX(0.87);">21</span>
<span class="t " style="left:184px;top:181.52px;color:#141414;font-size:7.4px;transform:scaleX(0.87);">Projektbeleg / Schlußrechnung</span>
<svg style="left:476px;top:183.02px" width="10" height="8" viewBox="0 0 10 8"><path d="M0.1 3.1H5" stroke="#5f6573" stroke-width="0.9"/><polygon points="6.10,0.40 6.78,2.97 9.43,2.82 7.19,4.26 8.16,6.73 6.10,5.05 4.04,6.73 5.01,4.26 2.77,2.82 5.42,2.97" fill="#c63a1a"/></svg>
<span class="t " style="left:159.9px;top:192.89px;color:#141414;font-size:7.4px;transform:scaleX(0.87);">R</span>
<span class="t " style="left:171.9px;top:192.89px;color:#141414;font-size:7.4px;transform:scaleX(0.87);">49</span>
<span class="t " style="left:184px;top:192.89px;color:#141414;font-size:7.4px;transform:scaleX(0.87);">Rechnung - Barverkauf</span>
<svg style="left:476px;top:194.39px" width="10" height="8" viewBox="0 0 10 8"><path d="M0.1 3.1H5.2" stroke="#5f6573" stroke-width="0.9"/><path d="M4.4 4.2L6 6.6L8.8 1.2" stroke="#3d9b3a" stroke-width="1.2" fill="none"/></svg>
<div class="abs" style="left:157.5px;top:90.6px;width:462.79999999999995px;height:0.9px;background:#4165b0;"></div>
<div class="abs" style="left:157.5px;top:91.1px;width:8px;height:10.47px;background:#3d83e6;"></div>
<span class="t " style="left:159.9px;top:90.54px;color:#a9c6f8;font-size:7.4px;transform:scaleX(0.87);">R</span>
<svg style="left:622.8px;top:92.2px" width="5.8" height="5.4" viewBox="0 0 5.8 5.4"><path d="M0.5 0.6H5.3" stroke="#5b7cc2" stroke-width="1"/><path d="M0 5.2L2.9 2.2L5.8 5.2Z" fill="#5b7cc2"/></svg>
<svg style="left:623px;top:102.3px" width="5.2" height="4.4" viewBox="0 0 5.2 4.4"><path d="M2.6 0L5.2 2.2L2.6 4.4L0 2.2Z" fill="#5b7cc2"/></svg>
<svg style="left:622.8px;top:111.8px" width="5.8" height="3.2" viewBox="0 0 5.8 3.2"><path d="M0 3.2L2.9 0.2L5.8 3.2Z" fill="#5b7cc2"/></svg>
<svg style="left:622.8px;top:282.8px" width="6.6" height="5" viewBox="0 0 6.6 5"><rect x="0.5" y="0.5" width="2.3" height="3.9" fill="none" stroke="#6c7ba4" stroke-width="0.7"/><rect x="3.7" y="0.5" width="2.3" height="3.9" fill="none" stroke="#52628e" stroke-width="0.8"/></svg>
<div class="abs" style="left:622.5px;top:291.5px;width:6.5px;height:0.8px;background:#b9bfe4;"></div>
<svg style="left:622px;top:295.2px" width="8" height="8" viewBox="0 0 8 8"><circle cx="2.7" cy="2.7" r="2.2" fill="none" stroke="#929db8" stroke-width="0.85"/><path d="M4.4 4.4L7 7.2" stroke="#7c91ce" stroke-width="1.2"/></svg>
<div class="abs" style="left:622.5px;top:305px;width:6.5px;height:0.8px;background:#b9bfe4;"></div>
<svg style="left:622px;top:309.6px" width="7.4" height="5.4" viewBox="0 0 7.4 5.4"><path d="M0.4 0.5H2V3.4H0.4ZM3 3.4V3M4 0.5H6.6M4 0.5V3.4H6.6V2H4" stroke="#8f9cc0" stroke-width="0.8" fill="none"/><path d="M0.2 4.8H7" stroke="#8f9cc0" stroke-width="0.7"/></svg>
<div class="abs" style="left:622.5px;top:317.8px;width:6.5px;height:0.8px;background:#b9bfe4;"></div>
<svg style="left:620.8px;top:322.4px" width="8" height="6.4" viewBox="0 0 8 6.4"><path d="M0.2 0.4H7.6L5 3.2V6.2L3.6 5.2V3.2Z" fill="#8e9dc4"/></svg>
<svg style="left:623.2px;top:495.6px" width="5.4" height="2.9" viewBox="0 0 5.4 2.9"><path d="M0 0L2.7 2.9L5.4 0Z" fill="#5b7cc2"/></svg>
<svg style="left:623.1px;top:503.8px" width="5.2" height="4.2" viewBox="0 0 5.2 4.2"><path d="M2.6 0L5.2 2.1L2.6 4.2L0 2.1Z" fill="#5b7cc2"/></svg>
<svg style="left:623.2px;top:512.6px" width="5.4" height="5" viewBox="0 0 5.4 5"><path d="M0 0.2L2.7 3L5.4 0.2Z" fill="#5b7cc2"/><path d="M0.4 4.2H5" stroke="#5b7cc2" stroke-width="1"/></svg>
</div></body></html>
